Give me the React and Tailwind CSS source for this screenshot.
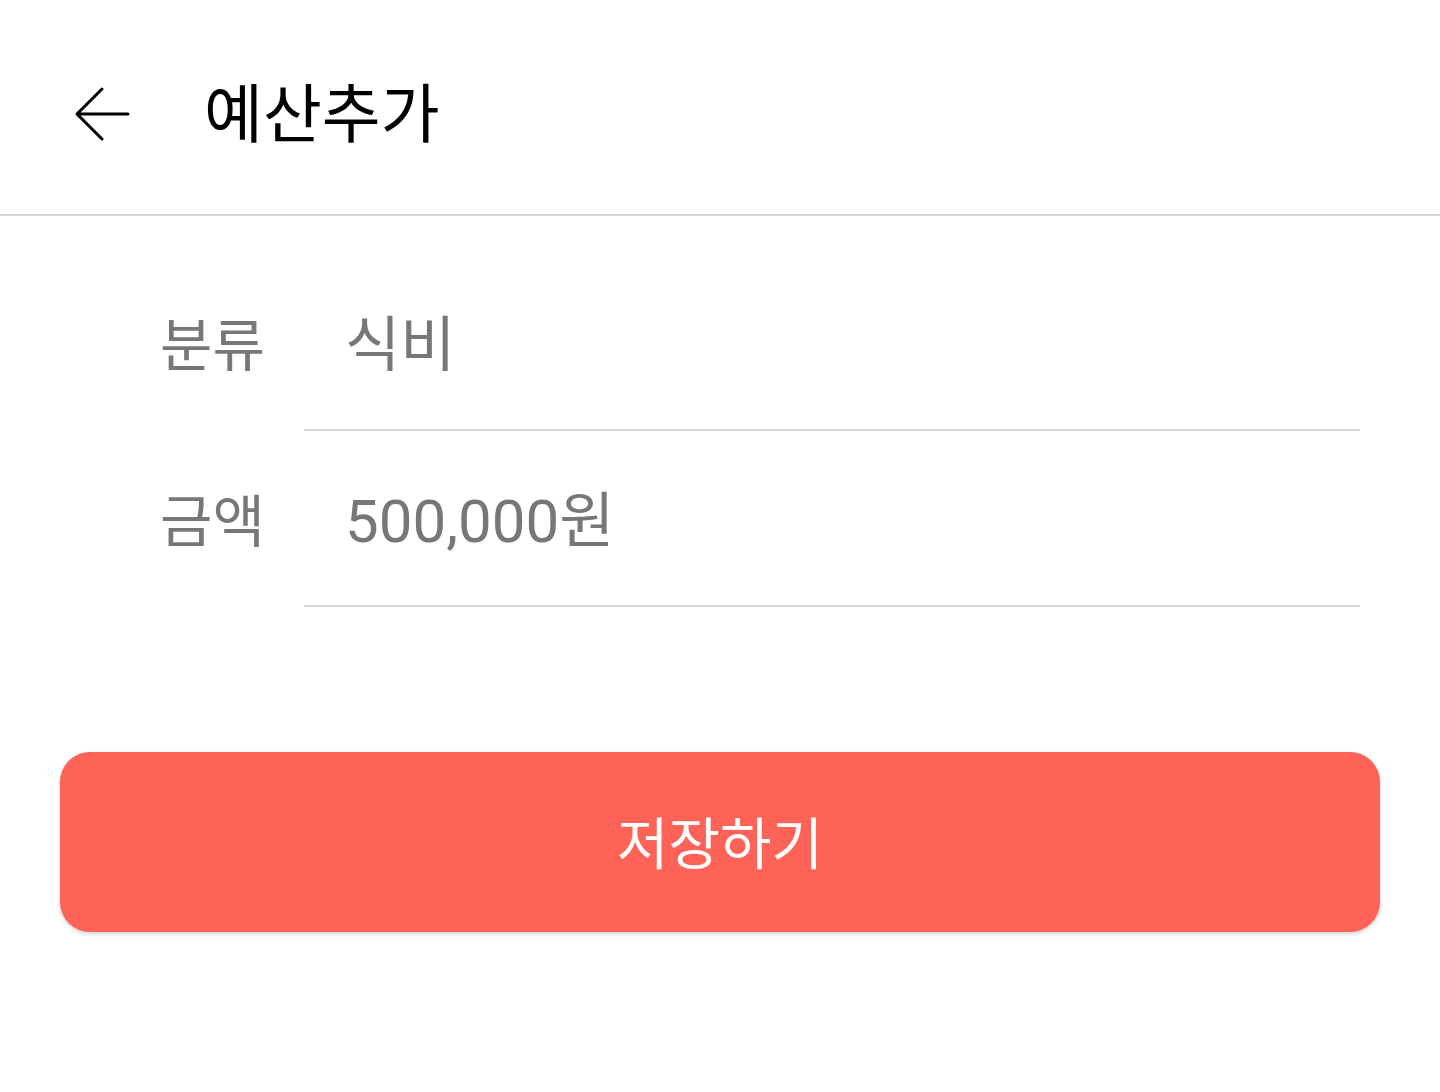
import React from 'react';

const fontStack = { fontFamily: "Roboto, 'Noto Sans CJK KR', sans-serif" };

const BackArrow = () => (
  <svg width="56" height="56" viewBox="0 0 56 56" fill="none">
    <path d="M54 28H4M28 3L3 28l25 25" stroke="#000" strokeWidth="3" strokeLinecap="round" strokeLinejoin="round" />
  </svg>
);

const FieldRow = ({ label, value }) => (
  <div className="flex items-stretch h-[176px]">
    <div className="w-[144px] flex items-center pt-[8px] text-[57px] text-[#777777]">{label}</div>
    <div className="flex-1 flex items-center pt-[8px] pl-[41px] border-b-2 border-[#d8d8d8] text-[60px] text-[#777777]">
      {value}
    </div>
  </div>
);

export default function App() {
  return (
    <div className="w-[1440px] h-[1092px] bg-white" style={fontStack}>
      {/* Header */}
      <div className="h-[216px] flex items-center pt-[14px] border-b-2 border-[#d6d6d6] pl-[74px]">
        <BackArrow />
        <h1 className="ml-[74px] mt-[4px] text-[64px] text-black leading-none">예산추가</h1>
      </div>

      {/* Form */}
      <div className="pt-[39px] pl-[160px] pr-[80px]">
        <FieldRow label="분류" value="식비" />
        <FieldRow label="금액" value="500,000원" />
      </div>

      {/* Save button */}
      <div className="px-[60px] pt-[145px]">
        <button className="w-full h-[180px] pt-[6px] rounded-[30px] bg-[#ff6257] text-white text-[56px] shadow-[0_2px_4px_rgba(0,0,0,0.18)]">
          저장하기
        </button>
      </div>
    </div>
  );
}
